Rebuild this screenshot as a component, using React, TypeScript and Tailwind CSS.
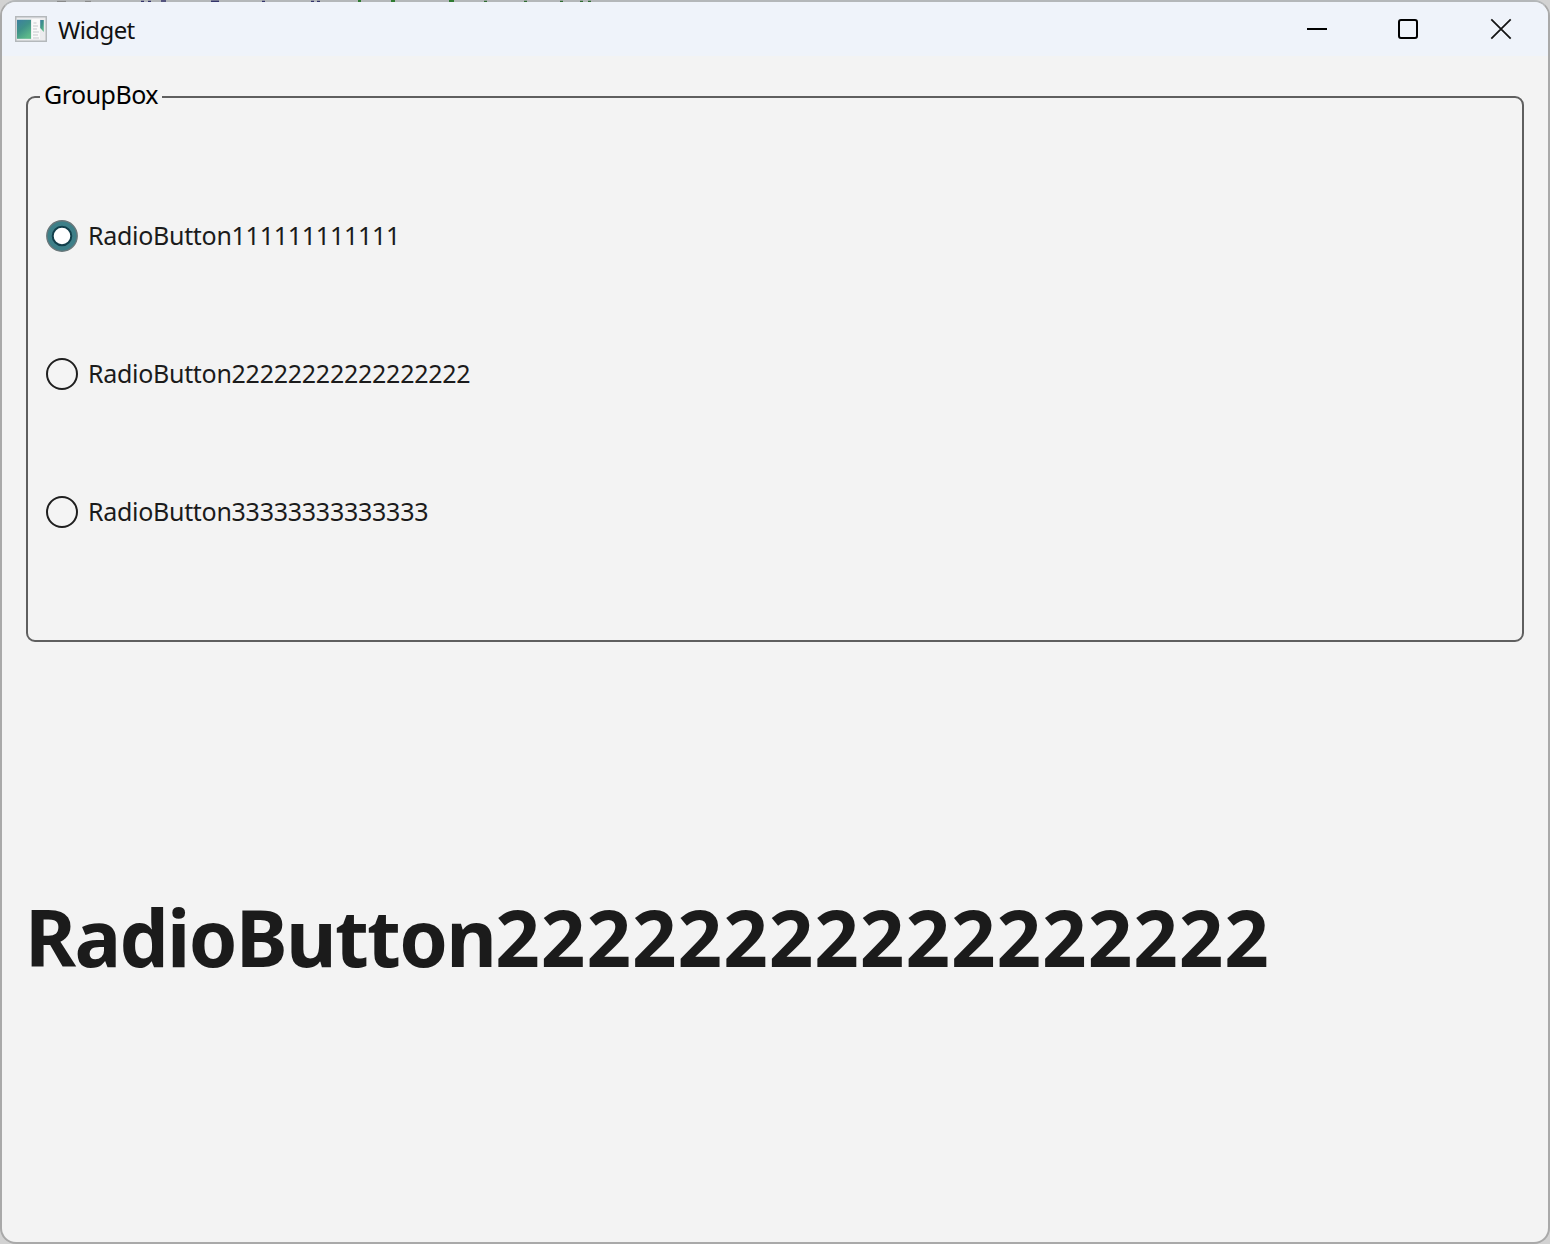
import { useState } from "react";

const options = [
  { name: "RadioButton", digits: "111111111111" },
  { name: "RadioButton", digits: "22222222222222222" },
  { name: "RadioButton", digits: "33333333333333" },
];

function AppIcon() {
  return (
    <svg width="32" height="26" viewBox="0 0 32 26">
      <defs>
        <linearGradient id="pane" x1="0" y1="0" x2="0.6" y2="1">
          <stop offset="0" stopColor="#3c7fa0" />
          <stop offset="0.5" stopColor="#3f9289" />
          <stop offset="1" stopColor="#5db98a" />
        </linearGradient>
      </defs>
      <rect x="0.75" y="0.75" width="30.5" height="24.5" fill="#ececee" stroke="#b4b8bb" strokeWidth="1.5" />
      <rect x="2" y="3.8" width="14" height="19" fill="url(#pane)" />
      <rect x="16.8" y="3" width="8" height="20" fill="#fafafa" />
      <path d="M18.5 7h3M18 10h5M18 13h4M18 16h6M18 19h5M18 22h6" stroke="#c5c8cb" strokeWidth="1" />
      <path d="M25.2 4h3.6v12l-3.6-4z" fill="url(#pane)" />
    </svg>
  );
}

/* Sliver of the editor behind the window, visible above the title bar. */
function BackdropSliver() {
  return (
    <svg className="absolute left-0 top-0" width="600" height="2" viewBox="0 0 600 2">
      <path d="M57 1.4h9M85 1.4h6" stroke="#858585" strokeWidth="1" />
      <path d="M141 1.4h3M148 1.4h3M161 1h5M211 1.3h8M262 1.4h3M311 1.4h3M317 1.4h3" stroke="#34356b" strokeWidth="1.4" />
      <path d="M358 1h3M391 1h4M449 1h5" stroke="#2f7b31" strokeWidth="2" />
      <path d="M484 1.4h3M524 1.4h3M560 1.4h3M580 1.4h3M588 1.4h3" stroke="#2f6b31" strokeWidth="1.4" />
    </svg>
  );
}

function TitleBar() {
  return (
    <header className="flex h-[54px] shrink-0 items-start justify-between bg-[#eff3fa]">
      <div className="flex items-start pl-[13px] pt-[14px]">
        <AppIcon />
        <span className="ml-[11px] mt-[-2px] text-[24px] leading-[32px] tracking-[-0.6px] text-[#111]">Widget</span>
      </div>
      <div className="flex pr-[35px] pt-[15px]">
        <button aria-label="Minimize" className="mr-[67px]">
          <svg width="24" height="24" viewBox="0 0 24 24">
            <path d="M2 12h20" stroke="#000" strokeWidth="2" />
          </svg>
        </button>
        <button aria-label="Maximize" className="mr-[69px]">
          <svg width="24" height="24" viewBox="0 0 24 24">
            <rect x="3" y="3" width="18" height="18" rx="2" fill="none" stroke="#000" strokeWidth="2" />
          </svg>
        </button>
        <button aria-label="Close">
          <svg width="24" height="24" viewBox="0 0 24 24">
            <path d="M2.3 2.3l19.4 19.4M21.7 2.3L2.3 21.7" stroke="#151515" strokeWidth="1.8" />
          </svg>
        </button>
      </div>
    </header>
  );
}

function RadioMark({ checked }: { checked: boolean }) {
  return (
    <svg width="32" height="32" viewBox="0 0 32 32">
      {checked ? (
        <>
          <circle cx="16" cy="16" r="15.2" fill="#3d7f88" stroke="#69777a" strokeWidth="1.4" />
          <circle cx="16" cy="16" r="9.3" fill="#fff" stroke="#123f4b" strokeWidth="2" />
        </>
      ) : (
        <circle cx="16" cy="16" r="15" fill="#f4f4f4" stroke="#1f1f1f" strokeWidth="2" />
      )}
    </svg>
  );
}

export default function App() {
  const [selected, setSelected] = useState(0);
  return (
    <div className="relative h-[1244px] w-[1550px] overflow-hidden bg-[#d2d2d2] font-['Noto_Sans',sans-serif]">
      <div className="flex h-full w-full flex-col overflow-hidden rounded-[16px] border-2 border-[#a9a9a9] border-t-[#b4b7b9] bg-[#f3f3f3]">
        <TitleBar />
        <main className="flex flex-1 flex-col px-[24px] pt-[40px]">
          <section className="relative h-[546px] rounded-[9px] border-2 border-[#5f5f5f]">
            <h2 className="absolute left-[12px] top-[-22px] bg-[#f3f3f3] px-[4px] text-[25px] leading-[36px] tracking-[-0.5px] text-black">
              GroupBox
            </h2>
            <div className="flex flex-col gap-[106px] pl-[18px] pt-[122px]" role="radiogroup">
              {options.map((option, index) => (
                <button
                  key={index}
                  role="radio"
                  aria-checked={selected === index}
                  onClick={() => setSelected(index)}
                  className="flex h-[32px] items-start self-start text-[25px] leading-[30px] text-[#1b1b1b]"
                >
                  <RadioMark checked={selected === index} />
                  <span className="ml-[10px] tracking-[-0.3px]">{option.name}</span>
                  <span className="tracking-[-0.25px]">{option.digits}</span>
                </button>
              ))}
            </div>
          </section>
          <h1 className="ml-[-1px] mt-[241px] flex text-[78px] font-bold leading-[108px] text-[#1b1b1b]">
            <span className="tracking-[-1.7px]">RadioButton</span>
            <span className="tracking-[0.95px]">22222222222222222</span>
          </h1>
        </main>
      </div>
      <BackdropSliver />
    </div>
  );
}
